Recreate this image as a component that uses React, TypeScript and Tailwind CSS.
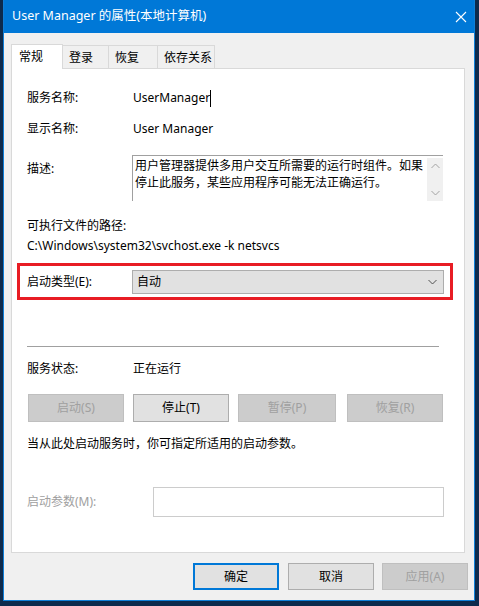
import React from 'react';

const font = "font-['Segoe_UI','Noto_Sans','Noto_Sans_CJK_SC',sans-serif]";

function Chevron({ up = false, className = '' }: { up?: boolean; className?: string }) {
  return (
    <svg width="9" height="6" viewBox="0 0 9 6" className={className}>
      <polyline
        points={up ? '0.5,5 4.5,1 8.5,5' : '0.5,1 4.5,5 8.5,1'}
        fill="none"
        stroke="currentColor"
        strokeWidth="1"
      />
    </svg>
  );
}

function Btn({ label, disabled, className = '' }: { label: string; disabled?: boolean; className?: string }) {
  return (
    <div
      className={`flex items-center justify-center border ${
        disabled ? 'bg-[#cccccc] border-[#bfbfbf] text-[#a0a0a0]' : 'bg-[#e1e1e1] border-[#adadad] text-black'
      } ${className}`}
    >
      {label}
    </div>
  );
}

export default function App() {
  const tabs = [
    { label: '登录', w: 'w-[46px]' },
    { label: '恢复', w: 'w-[49px]' },
    { label: '依存关系', w: 'w-[57px]' },
  ];

  return (
    <div className={`w-[479px] h-[606px] bg-[#0d2a4c] text-[12px] text-black ${font}`}>
      <div className="ml-[3px] w-[472px] h-[601px] bg-[#f0f0f0] border-x border-b border-[#0f7fd8] flex flex-col">
        {/* title bar */}
        <div className="h-[33px] bg-[#0078d7] flex items-center justify-between pl-[8px] pr-[7px] text-white">
          <span className="text-[12.5px] leading-none">User Manager 的属性(本地计算机)</span>
          <svg width="12" height="12" viewBox="0 0 12 12">
            <path d="M1 1 L11 11 M11 1 L1 11" stroke="white" strokeWidth="1.1" />
          </svg>
        </div>

        {/* tabs */}
        <div className="mt-[10px] ml-[7px] flex items-end h-[25px]">
          <div className="h-[25px] w-[52px] bg-white border border-b-0 border-[#d9d9d9] -mb-px relative z-10 pl-[7px] pt-[3px]">
            常规
          </div>
          {tabs.map(t => (
            <div
              key={t.label}
              className={`h-[23px] ${t.w} bg-[#f0f0f0] border border-l-0 border-b-0 border-[#d9d9d9] pl-[6px] pt-[3px]`}
            >
              {t.label}
            </div>
          ))}
        </div>

        {/* panel */}
        <div className="ml-[7px] w-[454px] h-[485px] bg-white border border-[#d9d9d9] flex flex-col pl-[15px]">
          <div className="mt-[19px] h-[20px] flex items-center">
            <div className="w-[106px]">服务名称:</div>
            <span>UserManager</span>
            <span className="inline-block w-px h-[17px] bg-black" />
          </div>

          <div className="mt-[11px] h-[20px] flex items-center">
            <div className="w-[106px]">显示名称:</div>
            <span>User Manager</span>
          </div>

          <div className="mt-[16px] flex">
            <div className="w-[105px] pt-[5px]">描述:</div>
            <div className="w-[311px] h-[46px] border-t border-l border-[#a0a0a0] flex">
              <div className="flex-1 pl-[2px] pt-[1px] leading-[17px]">
                <div>用户管理器提供多用户交互所需要的运行时组件。如果</div>
                <div>停止此服务，某些应用程序可能无法正确运行。</div>
              </div>
              <div className="w-[16px] mt-[2px] bg-[#f0f0f0] flex flex-col items-center justify-between py-[5px] text-[#a3a3a3]">
                <Chevron up />
                <Chevron />
              </div>
            </div>
          </div>

          <div className="mt-[15px] h-[20px] flex items-center">可执行文件的路径:</div>
          <div className="h-[20px] flex items-center">C:\Windows\system32\svchost.exe -k netsvcs</div>

          {/* highlighted startup type */}
          <div className="mt-[7px] -ml-[10px] w-[436px] h-[37px] border-[3px] border-[#e81c24] flex items-center pl-[7px]">
            <div className="w-[105px]">启动类型(E):</div>
            <div className="w-[312px] h-[24px] bg-[#e1e1e1] border border-[#adadad] flex items-center justify-between pl-[4px] pr-[6px]">
              <span>自动</span>
              <Chevron className="text-[#505050]" />
            </div>
          </div>

          <div className="mt-[46px] w-[412px] h-px bg-[#a0a0a0]" />

          <div className="mt-[12px] h-[20px] flex items-center">
            <div className="w-[106px]">服务状态:</div>
            <span>正在运行</span>
          </div>

          <div className="mt-[15px] flex ml-px">
            <Btn label="启动(S)" disabled className="w-[96px] h-[28px]" />
            <Btn label="停止(T)" className="w-[96px] h-[28px] ml-[9px]" />
            <Btn label="暂停(P)" disabled className="w-[98px] h-[28px] ml-[9px]" />
            <Btn label="恢复(R)" disabled className="w-[96px] h-[28px] ml-[11px]" />
          </div>

          <div className="mt-[12px] h-[20px] flex items-center">当从此处启动服务时，你可指定所适用的启动参数。</div>

          <div className="mt-[33px] flex items-center">
            <div className="w-[126px] text-[#a0a0a0]">启动参数(M):</div>
            <div className="w-[291px] h-[30px] bg-white border border-[#cccccc]" />
          </div>
        </div>

        {/* dialog buttons */}
        <div className="mt-[10px] flex justify-end pr-[6px]">
          <div className="w-[86px] h-[27px] bg-[#e1e1e1] border-2 border-[#0078d7] flex items-center justify-center">
            确定
          </div>
          <Btn label="取消" className="w-[86px] h-[27px] ml-[9px]" />
          <Btn label="应用(A)" disabled className="w-[86px] h-[27px] ml-[8px]" />
        </div>
      </div>
    </div>
  );
}
